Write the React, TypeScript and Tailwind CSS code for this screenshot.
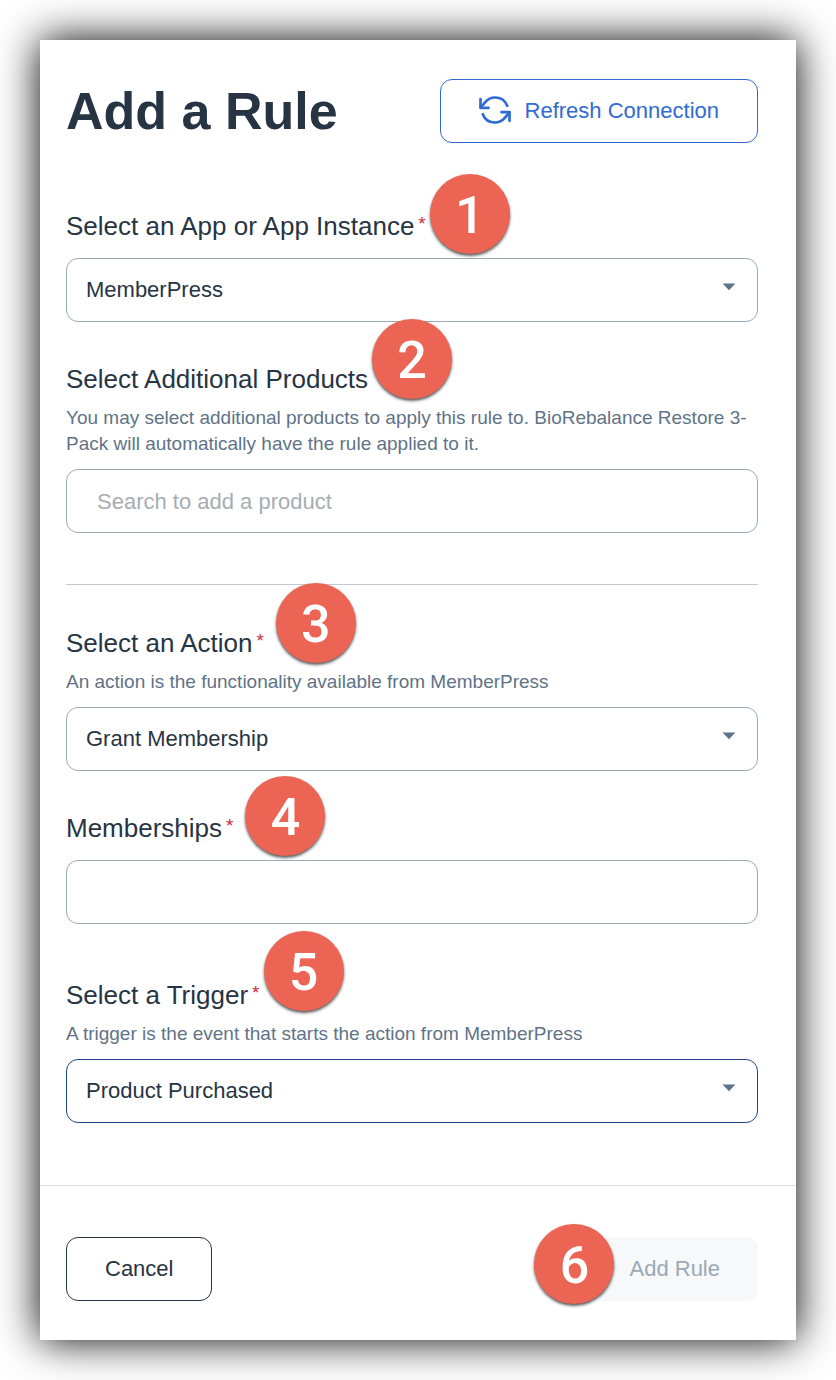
import { useState } from 'react';
import type { ReactNode } from 'react';
import { clsx } from 'clsx';

const CONTROL =
  'block h-16 w-full rounded-xl border bg-white text-[22px] text-[#273444] outline-none placeholder:text-[#a7adb3]';

const BUTTON = 'h-16 rounded-xl px-[38px] pb-0.5 text-[22px]';

// Numbered callout; the caller places it
function Marker({ n, className }: { n: number; className: string }) {
  return (
    <span
      aria-hidden="true"
      className={clsx(
        "absolute z-10 flex size-20 items-center justify-center rounded-full bg-[#ec6554] pt-1 font-['Roboto',sans-serif] text-[52px] leading-none font-medium text-white shadow-[0_2px_3px_rgba(0,0,0,0.65)]",
        className,
      )}
    >
      {n}
    </span>
  );
}

function RefreshIcon() {
  return (
    <svg width="32" height="28" viewBox="0 0 32 28" fill="none" stroke="currentColor" strokeWidth="2.7" strokeLinecap="round" strokeLinejoin="round">
      <path d="M1.5 3.2v8.6h8" />
      <path d="M1.800 11.500L6 6.400C8.700 3.200 12 1.500 16 1.500c5.800 0 10.300 3.300 12.200 8.300" />
      <path d="M30.5 24.8v-8.600h-8" />
      <path d="M30.200 16.500L26 21.600C23.300 24.800 20 26.500 16 26.500c-5.800 0-10.300-3.300-12.200-8.300" />
    </svg>
  );
}

interface FieldProps {
  id: string;
  label: string;
  marker: number;
  markerClass: string;
  required?: boolean;
  hint?: string;
  children: ReactNode;
}

function Field({ id, label, marker, markerClass, required, hint, children }: FieldProps) {
  return (
    <div>
      <div className="relative inline-block align-top">
        <label htmlFor={id} className="block text-[26px] leading-8 text-[#273444]">
          {label}
          {required && <span className="ml-1 align-[5px] text-[19px] leading-none text-[#d0293c]">*</span>}
        </label>
        <Marker n={marker} className={clsx('left-full', markerClass)} />
      </div>
      {hint && <p className="mt-[10px] text-[19px] leading-[26px] text-[#5f7387]">{hint}</p>}
      <div className={hint ? 'mt-3' : 'mt-4'}>{children}</div>
    </div>
  );
}

interface SelectProps {
  id: string;
  options: string[];
  active?: boolean;
}

function Select({ id, options, active }: SelectProps) {
  const [value, setValue] = useState(options[0]);

  return (
    <div className="relative">
      <select
        id={id}
        value={value}
        onChange={(e) => setValue(e.target.value)}
        className={clsx(CONTROL, 'appearance-none pr-14 pb-0.5 pl-[19px]', active ? 'border-[#1f3f8f]' : 'border-[#9ba9b7]')}
      >
        {options.map((option) => (
          <option key={option}>{option}</option>
        ))}
      </select>
      <svg className="pointer-events-none absolute top-[25px] right-[22px]" width="14" height="8" viewBox="0 0 14 8" fill="#5f7387">
        <path d="M0.500 0.500h13L7 7.300z" />
      </svg>
    </div>
  );
}

export default function App() {
  const [search, setSearch] = useState('');
  const [memberships, setMemberships] = useState('');

  return (
    <div className="bg-white p-10 font-['Liberation_Sans',Arial,sans-serif]">
      <form
        className="bg-white shadow-[0_0_40px_rgba(0,0,0,1)]"
        onSubmit={(e) => e.preventDefault()}
      >
        <div className="pr-[38px] pb-[62px] pl-[26px]">
          {/* Header */}
          <header className="flex items-center justify-between pt-[39px]">
            <h1 className="text-[52px] leading-none font-bold text-[#273444]">Add a Rule</h1>
            <button
              type="button"
              className={clsx(BUTTON, 'flex items-center gap-[14px] border border-[#2f6bd3] text-[#2f6bd3]')}
            >
              <RefreshIcon />
              Refresh Connection
            </button>
          </header>

          {/* App and products */}
          <div className="mt-[67px] space-y-[41px]">
            <Field id="app" label="Select an App or App Instance" marker={1} markerClass="-top-9 ml-1" required>
              <Select id="app" options={['MemberPress']} />
            </Field>
            <Field
              id="products"
              label="Select Additional Products"
              marker={2}
              markerClass="-top-11 ml-1"
              hint="You may select additional products to apply this rule to. BioRebalance Restore 3-Pack will automatically have the rule applied to it."
            >
              <input
                id="products"
                type="text"
                placeholder="Search to add a product"
                value={search}
                onChange={(e) => setSearch(e.target.value)}
                className={clsx(CONTROL, 'border-[#9ba9b7] px-[30px] pt-0.5')}
              />
            </Field>
          </div>

          <hr className="mt-[51px] mb-[42px] border-[#c3c8ce]" />

          {/* Action and trigger */}
          <div className="space-y-[41px]">
            <Field
              id="action"
              label="Select an Action"
              marker={3}
              markerClass="-top-11 ml-3"
              required
              hint="An action is the functionality available from MemberPress"
            >
              <Select id="action" options={['Grant Membership']} />
            </Field>
            <Field id="memberships" label="Memberships" marker={4} markerClass="-top-9 ml-3" required>
              <input
                id="memberships"
                type="text"
                value={memberships}
                onChange={(e) => setMemberships(e.target.value)}
                className={clsx(CONTROL, 'border-[#9ba9b7] px-[30px]')}
              />
            </Field>
            <div className="pt-[14px]">
              <Field
                id="trigger"
                label="Select a Trigger"
                marker={5}
                markerClass="-top-12 ml-1"
                required
                hint="A trigger is the event that starts the action from MemberPress"
              >
                <Select id="trigger" options={['Product Purchased']} active />
              </Field>
            </div>
          </div>
        </div>

        {/* Footer */}
        <footer className="flex items-center justify-between border-t border-[#dcdfe2] pt-[51px] pr-[38px] pb-[39px] pl-[26px]">
          <button type="button" className={clsx(BUTTON, 'border border-[#273444] text-[#273444]')}>
            Cancel
          </button>
          <div className="relative">
            <button type="submit" disabled className={clsx(BUTTON, 'bg-[#f6f8fa] text-[#9ba9b7]')}>
              Add Rule
            </button>
            <Marker n={6} className="-top-[13px] -left-[57px]" />
          </div>
        </footer>
      </form>
    </div>
  );
}
